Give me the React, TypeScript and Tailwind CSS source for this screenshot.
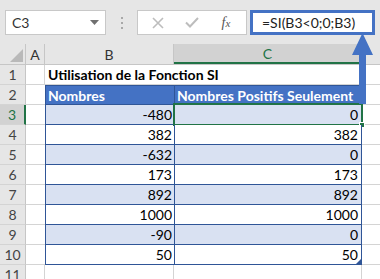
import React from "react";

const rows: { n: number; b: string; c: string }[] = [
  { n: 3, b: "-480", c: "0" },
  { n: 4, b: "382", c: "382" },
  { n: 5, b: "-632", c: "0" },
  { n: 6, b: "173", c: "173" },
  { n: 7, b: "892", c: "892" },
  { n: 8, b: "1000", c: "1000" },
  { n: 9, b: "-90", c: "0" },
  { n: 10, b: "50", c: "50" },
];

function RowHead({ n, sel }: { n: number; sel?: boolean }) {
  return (
    <div
      className={
        "w-[26px] h-[20px] shrink-0 flex items-center justify-center text-[14px] text-[#444] border-b border-[#d4d4d4] " +
        (sel
          ? "bg-[#d2d2d2] border-r-2 border-r-[#217346] text-[#217346]"
          : "bg-[#e6e6e6] border-r border-r-[#c6c6c6]")
      }
    >
      {n}
    </div>
  );
}

export default function App() {
  const font = { fontFamily: "Lato, 'Liberation Sans', sans-serif" };
  return (
    <div className="relative w-[380px] h-[279px] overflow-hidden bg-white" style={font}>
      {/* toolbar */}
      <div className="h-[44px] bg-[#e6e6e6] flex items-start pt-[10px]">
        <div className="ml-[5px] w-[101px] h-[25px] bg-white border border-[#c8c8c8] flex items-center pl-[6px] pr-[6px] text-[14px] text-[#333]">
          <span className="flex-1">C3</span>
          <svg width="9" height="5" viewBox="0 0 9 5">
            <path d="M0 0h9L4.5 5z" fill="#707070" />
          </svg>
        </div>
        <div className="w-[31px] h-[25px] flex flex-col items-center justify-center gap-[3px]">
          <div className="w-[2px] h-[2px] bg-[#a8a8a8]" />
          <div className="w-[2px] h-[2px] bg-[#a8a8a8]" />
          <div className="w-[2px] h-[2px] bg-[#a8a8a8]" />
        </div>
        <div className="w-[110px] h-[25px] bg-white border border-[#c8c8c8] flex items-center">
          <div className="w-[40px] flex justify-center">
            <svg width="12" height="12" viewBox="0 0 12 12">
              <path d="M1 1L11 11M11 1L1 11" stroke="#bdbdbd" strokeWidth="1.6" />
            </svg>
          </div>
          <div className="w-[28px] flex justify-center">
            <svg width="14" height="11" viewBox="0 0 14 11">
              <path d="M1 5.5L5 9.5L13 1" stroke="#bdbdbd" strokeWidth="2" fill="none" />
            </svg>
          </div>
          <div
            className="flex-1 flex justify-center text-[14px] italic text-[#555]"
            style={{ fontFamily: "'Liberation Serif', serif" }}
          >
            <span>f</span>
            <span className="text-[11px] mt-[3px]">x</span>
          </div>
        </div>
        <div className="ml-[3px] w-[125px] h-[25px] bg-white border-[3px] border-[#4472c4] flex items-center pl-[9px] text-[14px] text-[#222]">
          =SI(B3&lt;0;0;B3)
        </div>
      </div>

      {/* column headers */}
      <div className="flex h-[21px] bg-[#e6e6e6] border-b border-[#c6c6c6]">
        <div className="w-[26px] shrink-0 border-r border-[#c6c6c6] relative">
          <svg className="absolute right-[2px] bottom-[2px]" width="13" height="13" viewBox="0 0 13 13">
            <path d="M13 0V13H0z" fill="#b9b9b9" />
          </svg>
        </div>
        <div className="w-[19px] shrink-0 border-r border-[#c6c6c6] flex items-center justify-center text-[14px] text-[#333]">
          A
        </div>
        <div className="w-[129px] shrink-0 border-r border-[#c6c6c6] flex items-center justify-center text-[14px] text-[#333]">
          B
        </div>
        <div className="w-[188px] shrink-0 bg-[#d2d2d2] border-b-2 border-[#217346] border-r border-r-[#c6c6c6] flex items-center justify-center text-[14px] text-[#217346]">
          C
        </div>
        <div className="flex-1" />
      </div>

      {/* row 1 */}
      <div className="flex">
        <RowHead n={1} />
        <div className="w-[19px] h-[20px] shrink-0 border-r border-b border-[#d4d4d4]" />
        <div className="w-[129px] h-[20px] shrink-0 border-b border-[#d4d4d4] pl-[3px] text-[14px] font-bold text-black whitespace-nowrap overflow-visible flex items-center">
          Utilisation de la Fonction SI
        </div>
        <div className="w-[188px] h-[20px] shrink-0 border-r border-b border-[#d4d4d4]" />
        <div className="flex-1 h-[20px] border-b border-[#d4d4d4]" />
      </div>

      {/* row 2 header */}
      <div className="flex">
        <RowHead n={2} />
        <div className="w-[19px] h-[20px] shrink-0 border-b border-[#d4d4d4]" />
        <div className="w-[129px] h-[20px] shrink-0 bg-[#4472c4] border-l border-t border-b border-[#2f5597] text-white font-bold text-[14px] pl-[2px] flex items-center">
          Nombres
        </div>
        <div className="w-[188px] h-[20px] shrink-0 bg-[#4472c4] border-l border-r border-t border-b border-[#2f5597] text-white font-bold text-[14px] pl-[2px] flex items-center whitespace-nowrap">
          Nombres Positifs Seulement
        </div>
        <div className="flex-1 h-[20px] border-b border-[#d4d4d4]" />
      </div>

      {rows.map((r, i) => {
        const bg = i % 2 === 0 ? "bg-[#d9e1f2]" : "bg-white";
        const sel = r.n === 3;
        return (
          <div className="flex" key={r.n}>
            <RowHead n={r.n} sel={sel} />
            <div className="w-[19px] h-[20px] shrink-0 border-b border-[#d4d4d4]" />
            <div
              className={
                "w-[129px] h-[20px] shrink-0 border-l border-b border-[#2f5597] text-[14px] text-black pr-[2px] flex items-center justify-end " +
                bg
              }
            >
              {r.b}
            </div>
            <div
              className={
                "relative w-[188px] h-[20px] shrink-0 border-l border-r border-b border-[#2f5597] text-[14px] text-black pr-[3px] flex items-center justify-end " +
                bg
              }
            >
              {r.c}
              {sel && (
                <>
                  <div className="absolute left-[-2px] top-[-2px] right-[-2px] bottom-[-2px] border-2 border-[#217346]" />
                  <div className="absolute right-[-4px] bottom-[-4px] w-[6px] h-[6px] bg-[#217346] border border-white" />
                </>
              )}
              {r.n === 10 && (
                <svg className="absolute right-0 bottom-0" width="5" height="5" viewBox="0 0 5 5">
                  <path d="M5 0V5H0z" fill="#2f5597" />
                </svg>
              )}
            </div>
            <div className="flex-1 h-[20px] border-b border-[#d4d4d4]" />
          </div>
        );
      })}

      {/* row 11 */}
      <div className="flex">
        <RowHead n={11} />
        <div className="w-[19px] h-[20px] shrink-0 border-r border-[#d4d4d4]" />
        <div className="w-[129px] h-[20px] shrink-0 border-r border-[#d4d4d4]" />
        <div className="w-[188px] h-[20px] shrink-0 border-r border-[#d4d4d4]" />
      </div>

      {/* blue arrow overlay */}
      <svg className="absolute left-[350px] top-[33px]" width="26" height="74" viewBox="0 0 26 74">
        <path d="M12.5 0L23 22H16V71H9V22H2z" fill="#4472c4" />
      </svg>
    </div>
  );
}
